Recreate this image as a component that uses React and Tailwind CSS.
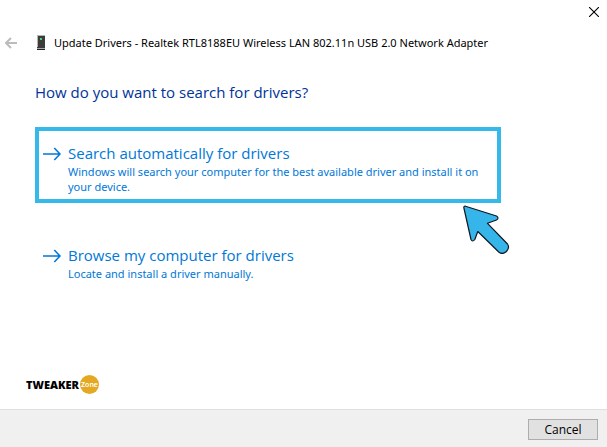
function ArrowIcon() {
  return (
    <svg viewBox="0 0 18 14" className="h-3.5 w-4.5 shrink-0" fill="none" stroke="currentColor" strokeWidth="1.6" aria-hidden="true">
      <path d="M0 7h17M11.300 1 17 7l-5.700 6" />
    </svg>
  );
}

function DriverOption({ title, children, highlighted }) {
  return (
    <button
      type="button"
      className={`flex w-full items-start gap-[7px] border-4 pt-3 pr-2 pb-[5px] pl-1 text-left text-[#0078d7] ${
        highlighted ? "border-[#35b9eb]" : "border-transparent"
      }`}
    >
      <span className="flex h-[22px] items-center">
        <ArrowIcon />
      </span>
      <span className="flex min-w-0 flex-1 flex-col gap-px">
        <span className="font-['Open_Sans','Noto_Sans',sans-serif] text-[15px] leading-5">{title}</span>
        <span className="text-[11px] leading-[15px]">{children}</span>
      </span>
    </button>
  );
}

function DeviceIcon() {
  return (
    <svg viewBox="0 0 10 15" className="h-[15px] w-2.5 shrink-0" shapeRendering="crispEdges" aria-hidden="true">
      <path d="M1 0h8v13H1z" fill="#b5b5b5" />
      <path d="M2 1h7v11H2z" fill="#3c3c3c" />
      <path d="M4 3h2v2H4z" fill="#3fe052" />
      <path d="M1 12h8v1H1z" fill="#3c3c3c" />
      <path d="M1 13h8v1H1z" fill="#aaa" />
      <path d="M1 14h8v1H1z" fill="#222" />
    </svg>
  );
}

function Pointer() {
  return (
    <svg viewBox="0 0 48 51" className="absolute -right-[9px] top-full h-[51px] w-12" aria-hidden="true">
      <path
        d="M3.500 3.200Q1.400 3 1.900 5L9 36.500Q10.500 39.500 12.800 36.500L15.800 28.500L37 49.300Q40.500 52 44.500 48.500Q48 44.500 45.500 41L25.500 20.300L34.500 17Q37.500 15 34.500 13Z"
        fill="#35b5ea"
        stroke="#111820"
        strokeWidth="1.200"
        strokeLinejoin="round"
      />
    </svg>
  );
}

export default function App() {
  return (
    <div className="flex min-h-screen flex-col bg-white font-['Noto_Sans','Open_Sans',sans-serif] text-xs text-black">
      <div className="flex h-6 items-center justify-end pr-2">
        <button type="button" aria-label="Close">
          <svg viewBox="0 0 10 10" className="size-2.5" stroke="#000" strokeWidth="1.100" aria-hidden="true">
            <path d="M0 0l10 10M10 0 0 10" />
          </svg>
        </button>
      </div>

      <header className="flex h-[37px] items-center pl-[5px]">
        <button type="button" aria-label="Back" className="text-[#bcbcbc]">
          <svg viewBox="0 0 12 12" className="size-3" fill="none" stroke="currentColor" strokeWidth="2" aria-hidden="true">
            <path d="M12 6H1M6 1 1 6l5 5" />
          </svg>
        </button>
        <span className="flex pr-2 pl-[19px]">
          <DeviceIcon />
        </span>
        <h1 className="text-[11px] leading-4">Update Drivers - Realtek RTL8188EU Wireless LAN 802.11n USB 2.0 Network Adapter</h1>
      </header>

      <main className="flex flex-1 flex-col pt-[21px] pl-[35px]">
        <h2 className="font-['Open_Sans','Noto_Sans',sans-serif] text-[15px] leading-5 text-[#003399]">
          How do you want to search for drivers?
        </h2>

        <div className="relative mt-[25px] mr-[106px]">
          <DriverOption title="Search automatically for drivers" highlighted>
            Windows will search your computer for the best available driver and install it on your device.
          </DriverOption>
          <Pointer />
        </div>
        <div className="mt-[26px] mr-[106px]">
          <DriverOption title="Browse my computer for drivers">Locate and install a driver manually.</DriverOption>
        </div>

        <div className="mt-auto -ml-[9px] flex items-center gap-px pb-[15px]">
          <span className="text-[11px] leading-4 font-black">TWEAKER</span>
          <span className="flex size-[19px] items-center justify-center rounded-full bg-[#e5a823] text-[7px] font-semibold text-white">Zone</span>
        </div>
      </main>

      <footer className="flex justify-end border-t border-[#dfdfdf] bg-[#f0f0f0] pt-[9px] pr-[9px] pb-[7px]">
        <button type="button" className="h-[21px] w-[70px] border border-[#adadad] bg-[#e1e1e1] font-['Open_Sans','Noto_Sans',sans-serif] text-xs leading-4">
          Cancel
        </button>
      </footer>
    </div>
  );
}
